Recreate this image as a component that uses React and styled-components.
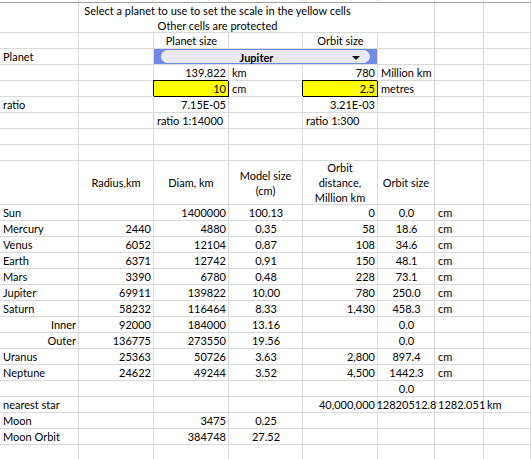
import React from "react";
import styled, { createGlobalStyle, css } from "styled-components";

const Global = createGlobalStyle`
  html, body { margin: 0; padding: 0; background: #fff; }
  body { width: 531px; height: 459px; overflow: hidden; }
`;

const GRID = "#dadada";

const Sheet = styled.div`
  display: grid;
  grid-template-columns: 79px 75px 75px 74px 75px 57px 49px 1fr;
  grid-template-rows: 3px 30px repeat(8, 16px) 44px repeat(16, 16px);
  width: 531px;
  font-family: Lato, "Open Sans", "Liberation Sans", sans-serif;
  font-size: 11px;
  color: #000;
`;

const Cell = styled.div`
  box-sizing: border-box;
  min-width: 0;
  border-right: 1px solid ${GRID};
  border-bottom: 1px solid ${GRID};
  padding: 0 2px 0 3px;
  line-height: 15px;
  white-space: nowrap;
  display: flex;
  align-items: center;
  justify-content: ${(p) =>
    p.$align === "right" ? "flex-end" : p.$align === "center" ? "center" : "flex-start"};
  ${(p) => p.$over && css`overflow: visible; position: relative; z-index: 1;`}
`;

const TopCell = styled(Cell)`
  border-bottom-color: #a3a3a3;
`;

const TitleCell = styled(Cell)`
  grid-column: span 5;
  flex-direction: column;
  justify-content: flex-start;
  align-items: center;
  padding: 0 78px 0 0;
  line-height: 15px;
`;

const InputCell = styled(Cell)`
  background: #ffff00;
  border-right-color: #000;
  border-bottom-color: #000;
  box-shadow: -1px -1px 0 0 #000;
  position: relative;
  z-index: 1;
`;

const HeadCell = styled(Cell)`
  flex-direction: column;
  text-align: center;
  justify-content: center;
  align-items: center;
  line-height: 15px;
  padding: 0 2px;
`;

const DropCell = styled(Cell)`
  grid-column: span 3;
  background: #7389e6;
  padding: 1px 7px 1px 7px;
  align-items: stretch;
`;

const Pill = styled.div`
  flex: 1;
  display: grid;
  grid-template-columns: 1fr 18px;
  align-items: center;
  background: #e9e9ef;
  border-radius: 7px;
  font-weight: 700;
`;

const PillText = styled.span`
  text-align: center;
`;

const Arrow = styled.span`
  width: 0;
  height: 0;
  border-left: 4px solid transparent;
  border-right: 4px solid transparent;
  border-top: 4px solid #111;
`;

const cols = 8;

function Row({ cells }) {
  const out = [];
  for (let i = 0; i < cols; i++) {
    const c = cells[i] || ["", "left"];
    out.push(
      <Cell key={i} $align={c[1]} $over={c[2]}>
        {c[0]}
      </Cell>
    );
  }
  return out;
}

const data = [
  ["Sun", "", "1400000", "100.13", "0", "0.0", "cm"],
  ["Mercury", "2440", "4880", "0.35", "58", "18.6", "cm"],
  ["Venus", "6052", "12104", "0.87", "108", "34.6", "cm"],
  ["Earth", "6371", "12742", "0.91", "150", "48.1", "cm"],
  ["Mars", "3390", "6780", "0.48", "228", "73.1", "cm"],
  ["Jupiter", "69911", "139822", "10.00", "780", "250.0", "cm"],
  ["Saturn", "58232", "116464", "8.33", "1,430", "458.3", "cm"],
  ["Inner", "92000", "184000", "13.16", "", "0.0", "", "", true],
  ["Outer", "136775", "273550", "19.56", "", "0.0", "", "", true],
  ["Uranus", "25363", "50726", "3.63", "2,800", "897.4", "cm"],
  ["Neptune", "24622", "49244", "3.52", "4,500", "1442.3", "cm"],
  ["", "", "", "", "", "0.0", ""],
  ["nearest star", "", "", "", "40,000,000", "12820512.8", "1282.051", "km"],
  ["Moon", "", "3475", "0.25", "", "", ""],
  ["Moon Orbit", "", "384748", "27.52", "", "", ""],
  ["", "", "", "", "", "", ""],
];

export default function App() {
  const blanks = (n, k) =>
    Array.from({ length: n }, (_, i) => <Cell key={k + i} />);
  return (
    <>
      <Global />
      <Sheet>
        {Array.from({ length: 8 }, (_, i) => (
          <TopCell key={"t" + i} />
        ))}

        <Cell />
        <TitleCell>
          <span>Select a planet to use to set the scale in the yellow cells</span>
          <span>Other cells are protected</span>
        </TitleCell>
        <Cell />
        <Cell />

        <Row cells={[[""], [""], ["Planet size", "center"], [""], ["Orbit size", "center"]]} />

        <Cell>Planet</Cell>
        <Cell />
        <DropCell>
          <Pill>
            <PillText>Jupiter</PillText>
            <Arrow />
          </Pill>
        </DropCell>
        <Cell />
        <Cell />
        <Cell />

        <Row
          cells={[[""], [""], ["139,822", "right"], ["km"], ["780", "right"], ["Million km", "left", true]]}
        />

        <Cell />
        <Cell />
        <InputCell $align="right">10</InputCell>
        <Cell>cm</Cell>
        <InputCell $align="right">2.5</InputCell>
        <Cell>metres</Cell>
        <Cell />
        <Cell />

        <Row cells={[["ratio"], [""], ["7.15E-05", "right"], [""], ["3.21E-03", "right"]]} />
        <Row cells={[[""], [""], ["ratio 1:14000"], [""], ["ratio 1:300"]]} />
        {blanks(8, "b1")}
        {blanks(8, "b2")}

        <Cell />
        <HeadCell>Radius,km</HeadCell>
        <HeadCell>Diam, km</HeadCell>
        <HeadCell>
          <span>Model size</span>
          <span>(cm)</span>
        </HeadCell>
        <HeadCell>
          <span>Orbit</span>
          <span>distance,</span>
          <span>Million km</span>
        </HeadCell>
        <HeadCell>Orbit size</HeadCell>
        <Cell />
        <Cell />

        {data.map((r, i) => (
          <Row
            key={"d" + i}
            cells={[
              [r[0], r[8] ? "right" : "left"],
              [r[1], "right"],
              [r[2], "right"],
              [r[3], "center"],
              [r[4], "right", true],
              [r[5], "center", true],
              [r[6], "left", true],
              [r[7] || "", "left"],
            ]}
          />
        ))}
      </Sheet>
    </>
  );
}
